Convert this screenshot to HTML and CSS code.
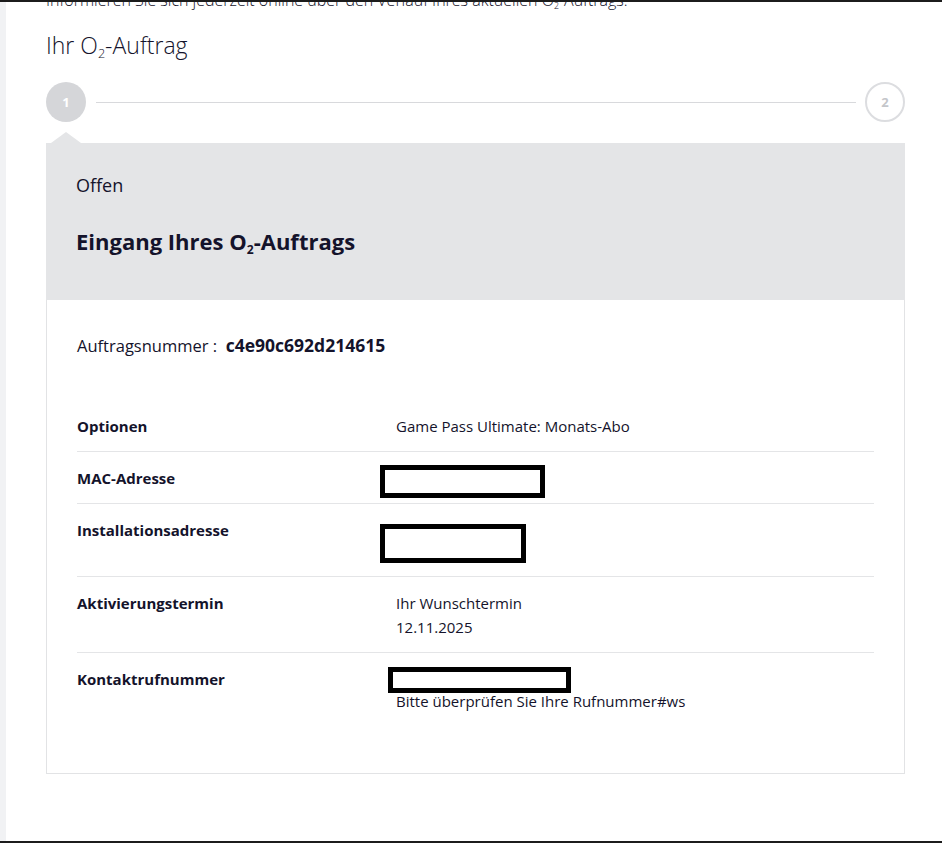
FILE: index.html
```html
<!DOCTYPE html>
<html lang="de">
<head>
<meta charset="utf-8">
<title>Ihr O2-Auftrag</title>
<link rel="stylesheet" href="styles.css">
</head>
<body>
<div class="topbar"></div>
<div class="layout">
  <div class="side"></div>
  <main class="main">
    <p class="intro">Informieren Sie sich jederzeit online über den Verlauf Ihres aktuellen O<sub>2</sub>-Auftrags.</p>
    <h1 class="title">Ihr O<sub>2</sub>-Auftrag</h1>
    <div class="stepper">
      <div class="step step-active">1</div>
      <div class="step-line"></div>
      <div class="step step-next">2</div>
    </div>
    <section class="status">
      <div class="status-label">Offen</div>
      <h2 class="status-title">Eingang Ihres O<sub>2</sub>-Auftrags</h2>
    </section>
    <section class="card">
      <div class="order-no">Auftragsnummer :&nbsp; <strong>c4e90c692d214615</strong></div>
      <div class="rows">
        <div class="row">
          <div class="label">Optionen</div>
          <div class="value">Game Pass Ultimate: Monats-Abo</div>
        </div>
        <div class="row">
          <div class="label">MAC-Adresse</div>
          <div class="value"><div class="redact redact-mac"></div></div>
        </div>
        <div class="row">
          <div class="label">Installationsadresse</div>
          <div class="value"><div class="redact redact-addr"></div></div>
        </div>
        <div class="row">
          <div class="label">Aktivierungstermin</div>
          <div class="value">Ihr Wunschtermin<br>12.11.2025</div>
        </div>
        <div class="row row-last">
          <div class="label">Kontaktrufnummer</div>
          <div class="value"><div class="redact redact-phone"></div>Bitte überprüfen Sie Ihre Rufnummer#ws</div>
        </div>
      </div>
    </section>
  </main>
</div>
<div class="bottombar"></div>
</body>
</html>
```
FILE: styles.css
```css
* { box-sizing: border-box; }
html, body { margin: 0; padding: 0; }
body {
  width: 942px;
  height: 843px;
  overflow: hidden;
  background: #ffffff;
  font-family: "Open Sans", "Noto Sans", sans-serif;
  color: #14132b;
  position: relative;
}
.topbar {
  position: absolute;
  left: 0; top: 0; right: 0;
  height: 2px;
  background: #1c1c1c;
  z-index: 2;
}
.bottombar {
  position: absolute;
  left: 0; bottom: 0; right: 0;
  height: 2px;
  background: #1c1c1c;
  z-index: 2;
}
.layout {
  display: flex;
  height: 843px;
}
.side {
  width: 6px;
  flex: none;
  background: #f1f2f4;
}
.main {
  width: 859px;
  margin-left: 40px;
}
sub {
  font-size: 0.55em;
  vertical-align: -0.3em;
  line-height: 0;
}
.intro {
  margin: -10px 0 0;
  font-size: 16px;
  line-height: 20px;
  font-weight: 300;
}
.title {
  margin: 21px 0 0;
  font-size: 23px;
  line-height: 28px;
  font-weight: 300;
}
.stepper {
  display: flex;
  align-items: center;
  margin-top: 23px;
  height: 40px;
}
.step {
  width: 40px;
  height: 40px;
  border-radius: 50%;
  flex: none;
  display: flex;
  align-items: center;
  justify-content: center;
  font-size: 13px;
  font-weight: 700;
}
.step-active {
  background: #d5d6d9;
  color: #ffffff;
  position: relative;
}
.step-active::after {
  content: "";
  position: absolute;
  left: 5px;
  top: 50px;
  border-left: 15px solid transparent;
  border-right: 15px solid transparent;
  border-bottom: 11px solid #e4e5e7;
}
.step-next {
  border: 2px solid #dcdde0;
  color: #c4c6ca;
}
.step-line {
  flex: 1;
  height: 1px;
  background: #d8d9dc;
  margin: 0 9px 0 10px;
}
.status {
  margin-top: 21px;
  background: #e4e5e7;
  padding: 31px 30px 0;
  height: 157px;
}
.status-label {
  font-size: 18px;
  line-height: 22px;
  font-weight: 400;
}
.status-title {
  margin: 31px 0 0;
  font-size: 22px;
  line-height: 28px;
  font-weight: 700;
}
.card {
  border: 1px solid #e2e3e5;
  border-top: none;
  padding: 33px 30px 47px;
}
.order-no {
  font-size: 16.5px;
  line-height: 24px;
  font-weight: 400;
}
.order-no strong { font-weight: 700; font-size: 17.5px; }
.rows {
  margin-top: 42px;
}
.row {
  display: grid;
  grid-template-columns: 319px 1fr;
  padding: 14px 0 13px;
  border-bottom: 1px solid #e4e5e7;
  font-size: 15px;
  line-height: 24px;
}
.row-last { border-bottom: none; }
.label { font-weight: 700; }
.value { font-weight: 400; }
.redact {
  border: 5px solid #000000;
  background: #ffffff;
}
.redact-mac {
  width: 165px;
  height: 33px;
  margin: -1px 0 -9px -16px;
}
.redact-addr {
  width: 146px;
  height: 39px;
  margin: 6px 0 0 -16px;
}
.redact-phone {
  width: 183px;
  height: 26px;
  margin: 0 0 -4px -8px;
}
```
